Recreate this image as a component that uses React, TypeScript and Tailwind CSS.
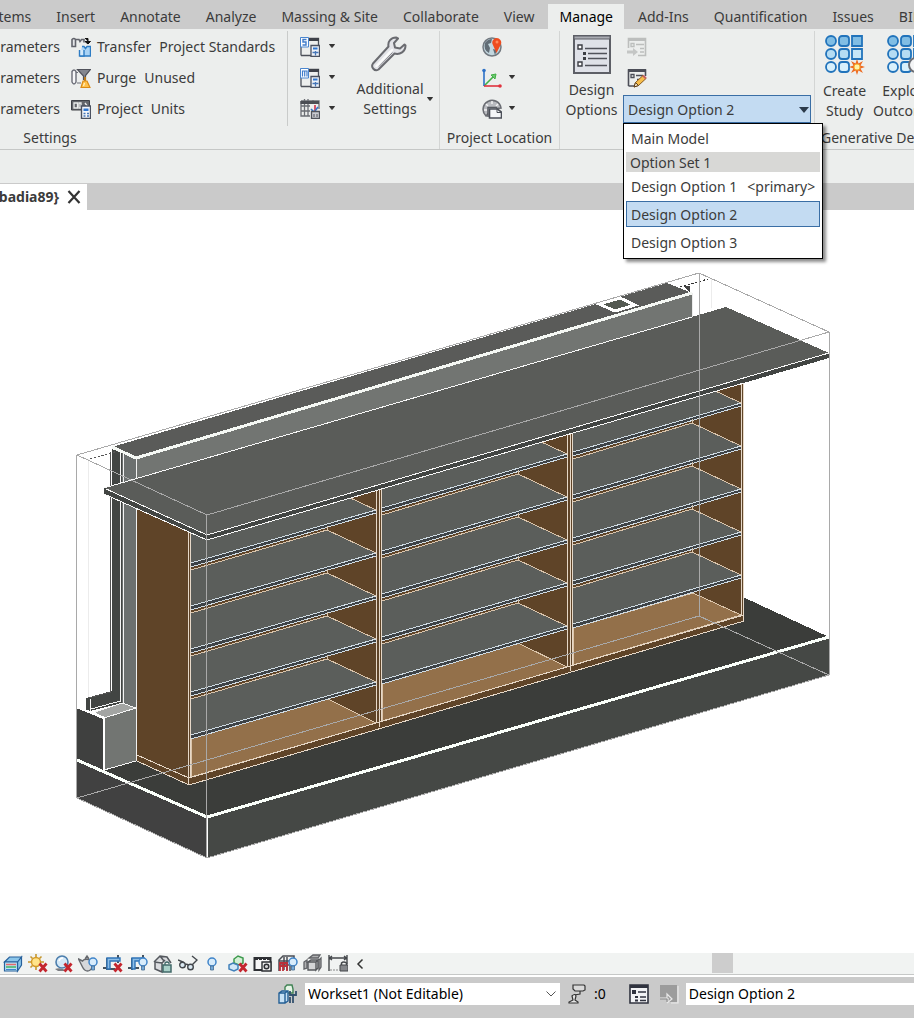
import { useState } from 'react';
import type { ReactNode } from 'react';

const tabs = [
  'Systems',
  'Insert',
  'Annotate',
  'Analyze',
  'Massing & Site',
  'Collaborate',
  'View',
  'Manage',
  'Add-Ins',
  'Quantification',
  'Issues',
  'BIM',
];

const Icon = ({ size = 20, children }: { size?: number; children: ReactNode }) => (
  <svg width={size} height={size} viewBox={`0 0 ${size} ${size}`} fill="none" className="shrink-0" aria-hidden="true">
    {children}
  </svg>
);

const Caret = () => (
  <svg width="8" height="5" viewBox="0 0 8 5" className="shrink-0" aria-hidden="true">
    <path d="M1.500 0.500h5L4 3.500z" fill="#333" stroke="#333" strokeLinejoin="round" />
  </svg>
);

/* ---------- ribbon icons ---------- */

const TransferIcon = () => (
  <Icon>
    <path d="M1 2.500q2-2 3.500 0v7H1zM4.500 2.500h3.500l1 2 1.500-2h2.500v3" fill="#e4e5e8" stroke="#62646c" strokeWidth="1.6" />
    <path d="M14 1.500h3v3M14 4.500h5.500L17 7z" stroke="#111" fill="#111" />
    <path d="M11 9.500h2l1.500 2 1.500-2h3.500V19H9" fill="#a9d3f5" stroke="#2d7cc4" strokeWidth="1.4" />
    <path d="M8.500 13v6H13v-6" fill="#d4eafb" stroke="#2d7cc4" strokeWidth="1.4" />
  </Icon>
);

const PurgeIcon = () => (
  <Icon>
    <path d="M1 3.500q2-3 4 0V14q-2 4-4 0z" fill="#f7f7f9" stroke="#6b6d77" strokeWidth="1.4" />
    <path d="M5 4.500h2M6 15h4" stroke="#6b6d77" strokeWidth="1.2" />
    <path d="M6.500 1.500h13l-5 6v4h-2V8z" fill="#83868f" stroke="#50525b" strokeWidth="1.2" />
    <path d="M14 9v4" stroke="#bd7b1c" strokeWidth="2" />
    <path d="M12 13h4l3 6.500H10z" fill="#ffc14a" stroke="#d98a17" strokeWidth="1.2" />
    <path d="M13.500 15l-1 3" stroke="#fff2c9" strokeWidth="1.2" />
  </Icon>
);

const UnitsIcon = () => (
  <Icon>
    <path d="M0.500 1.500h18V11H0.500z" fill="#63666b" stroke="#3e4146" />
    <path d="M3 4h3.500v5H3zM8 4h2v5H8zM14 4l3 4" stroke="#eceeed" strokeWidth="1.3" />
    <path d="M10.500 7h9v12.500h-9z" fill="#f2f5fa" stroke="#4a5160" strokeWidth="1.4" />
    <path d="M12.500 9.500h5v2.500h-5z" fill="#2f76d0" />
    <path d="M12.500 14.500h2M16 14.500h2M12.500 17h2M16 17h2" stroke="#4576b8" strokeWidth="1.3" />
  </Icon>
);

const SettingsSheetIcon = ({ letter }: { letter: 'S' | 'M' }) => (
  <Icon>
    <path d="M1 18.500V1.500h17.500V8M1 18.500h10" stroke="#4c5059" strokeWidth="1.3" />
    <path d="M9 1h10v3H9z" fill="#3f424a" />
    <path d="M0.500 0.500h8v9.500h-8z" fill="#fff" stroke="#4a86cf" />
    {letter === 'S' ? (
      <path d="M6.500 2.500H3v2.500h3v3H2.500" stroke="#3f7ccb" strokeWidth="1.4" />
    ) : (
      <path d="M2.500 8.500V3h4.500v5.500M4.700 3v5.500" stroke="#3f7ccb" strokeWidth="1.2" />
    )}
    <path d="M11 8.500h8.500v11H11z" fill="#eef2f8" stroke="#4a5160" strokeWidth="1.3" />
    <path d="M13 10.500h4.500v2H13z" fill="#2f76d0" />
    <path d="M12.500 15.500h6M15.500 14v4.500" stroke="#4576b8" strokeWidth="1.3" />
  </Icon>
);

const PanelScheduleIcon = () => (
  <Icon>
    <path d="M1 2h18v8M1 2v15h9M1 7h9M1 12h9M4.500 0v17M8 0v17M13 1v3" stroke="#6a6d73" strokeWidth="1.3" />
    <path d="M0.500 2h18.500v3H0.500z" fill="#4b4e54" />
    <path d="M15 6v7" stroke="#d12f4a" strokeWidth="1.6" />
    <path d="M11 10l3 3M18 8l-3 4" stroke="#3573c4" strokeWidth="1.6" />
    <path d="M11.500 12.500h8v7h-8z" fill="#c9cbd1" stroke="#50545c" strokeWidth="1.3" />
    <path d="M14 15v3M17 15v3" stroke="#50545c" />
  </Icon>
);

const WrenchIcon = () => (
  <Icon size={38}>
    <path
      d="M26 2.500C21 2.500 17.500 6.500 18.500 11.500L3 28.500C0.500 32 4.500 37 8.500 34.500L24.500 18.500C30 20 35.500 16.500 35.500 10.500L34.500 9.500L30 13.500L25 12.500L24 8L28 3.500Z"
      fill="#e3e4e8"
      stroke="#6a6b70"
      strokeWidth="2"
      strokeLinejoin="round"
    />
    <path d="M22 15L6.500 31" stroke="#fafafa" strokeWidth="2.500" strokeLinecap="round" />
    <path d="M22.500 17.500L9 31.500" stroke="#85868b" />
  </Icon>
);

const GlobeIcon = () => (
  <Icon>
    <circle cx="10" cy="10" r="9" fill="#c3d7df" stroke="#727980" strokeWidth="1.500" />
    <path d="M3 6q3-4 7-4l-1 4-3 1 2 4-1 5Q1 13 3 6zM11 12l4 1-2 5z" fill="#626d76" />
    <path d="M14.500 16L10.500 7a4.500 4.500 0 1 1 8.500 0z" fill="#ef4c1f" />
    <circle cx="15" cy="5" r="1.500" fill="#ff8a5c" />
  </Icon>
);

const AxesIcon = () => (
  <Icon>
    <path d="M2 18L12 8" stroke="#43b047" strokeWidth="1.600" />
    <path d="M14 6l-1 5-4-4z" fill="#6cc76f" stroke="#43b047" />
    <path d="M2 18V3" stroke="#2e71c7" strokeWidth="1.600" />
    <circle cx="2" cy="2.500" r="1.800" fill="#2e71c7" />
    <path d="M2 18h16" stroke="#e0323e" strokeWidth="1.600" />
    <circle cx="18" cy="18" r="1.800" fill="#e0323e" />
  </Icon>
);

const PositionIcon = () => (
  <Icon>
    <path d="M4 17A9 9 0 1 1 19 9L10 10z" fill="#b9bbc0" stroke="#6b6d73" strokeWidth="1.600" />
    <path d="M10 2v3M4 5l2 2M16 5l-2 2M2 11h3" stroke="#f4f4f4" strokeWidth="1.400" />
    <path d="M6 18V8.500h9" stroke="#585b62" strokeWidth="1.500" fill="#d5d7da" />
    <path d="M7.500 10h8l4 3v6h-12z" fill="#f5f6f8" stroke="#4c5059" strokeWidth="1.600" />
    <path d="M15 10v3.500h4" stroke="#4c5059" />
  </Icon>
);

const DesignOptionsIcon = () => (
  <Icon size={40}>
    <path d="M2 2h36v37H2z" fill="#dfe1e8" stroke="#5d5f66" strokeWidth="2" />
    <path d="M2 2h36v3H2z" fill="#a9abb2" stroke="#5d5f66" />
    <path d="M6 11h4v4H6zM6 28h4v4H6z" fill="#fff" stroke="#3c3e44" strokeWidth="1.400" />
    <path d="M13 14.500h22M16 19.500h19M16 24.500h19M13 31.500h22" stroke="#50525a" strokeWidth="1.500" />
    <path d="M11 18h3v3h-3zM11 23h3v3h-3z" fill="#3c3e44" />
  </Icon>
);

const AddToSetIcon = () => (
  <Icon>
    <path d="M1.500 11V1.500h17v17H11" stroke="#bcbebd" strokeWidth="1.600" />
    <path d="M1 1h18v3H1z" fill="#bcbebd" />
    <path d="M4 6.500h3v3H4zM9 7.500h8M13 11.500h4M13 15h4" stroke="#bcbebd" strokeWidth="1.300" />
    <path d="M0 13.500h6v-2.500l5 4-5 4v-2.500H0z" fill="#c4c6c5" />
  </Icon>
);

const PickToEditIcon = () => (
  <Icon>
    <path d="M1.500 18V2h17v6M1.500 18h6" stroke="#4c4e58" strokeWidth="1.600" />
    <path d="M1 1h18v3H1z" fill="#4c4e58" />
    <path d="M4 6.500h3v3H4zM9 7.500h7M10 11.500h3" stroke="#4c4e58" strokeWidth="1.300" />
    <path d="M7 19l1.500-4.500L16 7.500l3 3-7.500 7z" fill="#f6bd4b" stroke="#8a5a1e" />
    <path d="M7 19l1.500-4.500 3 3z" fill="#f7e5c5" stroke="#5a3d1a" />
    <path d="M16 7.500l3 3" stroke="#c65f5f" strokeWidth="2" />
  </Icon>
);

const StudyGrid = ({ children }: { children: ReactNode }) => (
  <Icon size={40}>
    <g stroke="#2173bb" strokeWidth="1.800">
      <circle cx="6" cy="6" r="5" fill="#80bde4" />
      <rect x="14" y="1" width="10" height="10" rx="3" fill="#80bde4" />
      <path d="M27 1h10v10H27z" fill="#80bde4" />
      <circle cx="6" cy="19" r="5" fill="#b5dcf3" />
      <rect x="14" y="14" width="10" height="10" rx="3" fill="#b5dcf3" />
      <path d="M27 14h10v10H27z" fill="#c6e6f7" />
      <circle cx="6" cy="32" r="5" fill="#d8f0fc" />
      <rect x="14" y="27" width="10" height="10" rx="3" fill="#d8f0fc" />
    </g>
    {children}
  </Icon>
);

/* ---------- view control bar ---------- */

const RedX = () => <path d="M11.500 9.500l7 8M18.500 9.500l-7 8" stroke="#c4262e" strokeWidth="2.800" />;
const Bulb = ({ x = 15, y = 8 }: { x?: number; y?: number }) => (
  <g>
    <circle cx={x} cy={y} r="4" fill="#d8ecfb" stroke="#3f84c9" strokeWidth="1.500" />
    <path d={`M${x - 1.5} ${y + 4}h3v4h-3z`} fill="#73a9d9" stroke="#44698f" strokeWidth="0.800" />
  </g>
);

const viewControls: { name: string; art: ReactNode }[] = [
  {
    name: 'Visual Style',
    art: (
      <>
        <path d="M1.500 8l5-5h12l-4 5zM14.500 8l4-5v8l-4 6z" fill="#8cc6ea" stroke="#27619c" strokeWidth="1.200" />
        <path d="M1.500 8h13v9h-13z" fill="#bfe4f4" stroke="#27619c" strokeWidth="1.200" />
        <path d="M3 10.500h10" stroke="#e56a6a" strokeWidth="1.500" />
        <path d="M3 13h10" stroke="#45b362" strokeWidth="1.500" />
        <path d="M3 15.500h10" stroke="#3f86cf" />
      </>
    ),
  },
  {
    name: 'Sun Path Off',
    art: (
      <>
        <path d="M8 0v3M8 13v3M0 8h3M2.500 2.500l2 2M13.500 2.500l-2 2M2.500 13.500l2-2M13 8h3" stroke="#c5962f" strokeWidth="1.600" />
        <circle cx="8" cy="8" r="4.500" fill="#ffe48a" stroke="#d49a26" strokeWidth="1.400" />
        <RedX />
      </>
    ),
  },
  {
    name: 'Shadows Off',
    art: (
      <>
        <path d="M2 15q6-2 12 2H5z" fill="#7b7d82" />
        <circle cx="9" cy="8" r="6" fill="#d5e9f8" stroke="#4c7ead" strokeWidth="1.600" />
        <path d="M6 7q1-3 4-3" stroke="#fff" strokeWidth="1.500" />
        <RedX />
      </>
    ),
  },
  {
    name: 'Show Rendering Dialog',
    art: (
      <>
        <path d="M0.500 5l4 2q2-3 9-1l1 7q-2 4-5 4t-5-4zM7 5l2-3 2 3" fill="#d6d8db" stroke="#66696e" strokeWidth="1.400" />
        <Bulb x={15} />
      </>
    ),
  },
  {
    name: 'Crop View Off',
    art: (
      <>
        <path d="M4 4v11h8M0 14h4M15 1v8" stroke="#46525e" strokeWidth="2" />
        <path d="M4 4h13v3H7v8H4z" fill="#8cbde6" stroke="#2f74b8" strokeWidth="1.400" />
        <RedX />
      </>
    ),
  },
  {
    name: 'Crop Region Visible',
    art: (
      <>
        <path d="M4 4v12M0 14h11M15 1v4" stroke="#46525e" strokeWidth="2" />
        <path d="M4 4h12v3H7v8H4z" fill="#8cbde6" stroke="#2f74b8" strokeWidth="1.400" />
        <Bulb />
      </>
    ),
  },
  {
    name: 'Unlocked 3D View',
    art: (
      <>
        <path d="M1 8l6-6 7 1 4 6M2 8v7l7 3V9zM7 2l4 5M1 8l8 1 3-3" stroke="#54585e" strokeWidth="1.500" fill="#dadcdf" />
        <path d="M10 11h8v7h-8z" fill="#a9d0c8" stroke="#426a69" strokeWidth="1.500" />
        <path d="M12 11V9q2-2 4 0v1" stroke="#426a69" strokeWidth="1.300" />
      </>
    ),
  },
  {
    name: 'Temporary Hide/Isolate',
    art: (
      <>
        <path d="M0 6l5 2 0 2M14 11l5-5-5-4M7 11q2-2 4 1" stroke="#43474c" strokeWidth="1.400" />
        <circle cx="4.500" cy="11" r="2.800" fill="#dceaf3" stroke="#43474c" strokeWidth="1.400" />
        <circle cx="12.500" cy="13" r="2.800" fill="#dceaf3" stroke="#43474c" strokeWidth="1.400" />
      </>
    ),
  },
  { name: 'Reveal Hidden Elements', art: <Bulb x={9} y={8} /> },
  {
    name: 'Worksharing Display Off',
    art: (
      <>
        <path d="M6 5l4-3 5 2v5l-4 2-5-2z" fill="#d5efd6" stroke="#3d9a4d" strokeWidth="1.500" />
        <path d="M1 11l4-2 5 2v4l-4 2-5-2z" fill="#d3e8f8" stroke="#4382bb" strokeWidth="1.500" />
        <RedX />
      </>
    ),
  },
  {
    name: 'Temporary View Properties',
    art: (
      <>
        <path d="M1.500 4h16v12h-16z" fill="#f6f6f6" stroke="#2d2f33" strokeWidth="2" />
        <path d="M2 4.500h15" stroke="#2d2f33" strokeWidth="3" strokeDasharray="3 1" />
        <path d="M9 8h9v9H9z" fill="#eee" stroke="#2d2f33" strokeWidth="1.400" />
        <circle cx="13.500" cy="12.500" r="2.300" fill="#d5d5d5" stroke="#2d2f33" strokeWidth="1.500" />
      </>
    ),
  },
  {
    name: 'Show Analytical Model',
    art: (
      <>
        <path d="M1 17V6l4-4h11v6M1 7h11v10M6 3v13M1 11h10M9 3v13" stroke="#4b4e54" strokeWidth="1.500" />
        <path d="M2 17V9h7v8M5 9v8M2 12h7" stroke="#bb3039" strokeWidth="1.800" />
        <Bulb />
      </>
    ),
  },
  {
    name: 'Highlight Displacement Sets',
    art: (
      <>
        <path d="M6 4l4-3h7l-2 3zM1 8l3-2v8l-3 1zM16 6l2-2v9l-2 3z" fill="#b0b1b3" stroke="#606266" strokeWidth="1.300" />
        <path d="M5 8l3-2h7l-2 2zM5 8h8v8H5zM13 8l2-2v8l-2 2z" fill="#d4d5d7" stroke="#56585c" strokeWidth="1.400" />
      </>
    ),
  },
  {
    name: 'Reveal Constraints',
    art: (
      <>
        <path d="M1 1v16M19 1v9M1 4h18M4 2L1.500 4 4 6M16 2l2.500 2L16 6" stroke="#44474b" strokeWidth="1.400" />
        <path d="M2 16h9" stroke="#888" strokeDasharray="2 1" />
        <path d="M12 11h8v6h-8z" fill="#84868a" stroke="#44474b" />
        <path d="M13.500 11V9q2-2 5 0v2" stroke="#44474b" strokeWidth="1.500" />
      </>
    ),
  },
];

/* ---------- 3D model ---------- */

// Each bay: left and right edge, first shelf height at the right edge,
// how much lower the shelf front sits on the left, and the floor corners.
const bays = [
  { x0: 191, x1: 376, tip: 510, drop: 53, floor: '191,777 376,723 328,699 191,739' },
  { x0: 382, x1: 567, tip: 454, drop: 54, floor: '382,721 567,667 518,643 382,683' },
  { x0: 573, x1: 741, tip: 403, drop: 49, floor: '573,665 741,615 693,593 573,628' },
];

const Shelf = ({ x0, x1, tip, drop }: { x0: number; x1: number; tip: number; drop: number }) => {
  const left = tip + drop;
  return (
    <g>
      <polygon points={`${x0},${left - 36} ${x1 - 49},${tip - 23} ${x1},${tip} ${x0},${left}`} fill="#5b5e5b" />
      <polyline
        points={`${x0},${left - 36} ${x1 - 49},${tip - 23} ${x1},${tip}`}
        fill="none"
        stroke="#d8c3ab"
      />
      <path d={`M${x1 - 49} ${tip - 23}v-4`} stroke="#d8c3ab" />
      <polygon points={`${x0},${left} ${x1},${tip} ${x1},${tip + 3} ${x0},${left + 4}`} fill="#3d4246" />
      <path d={`M${x0} ${left}L${x1} ${tip}v3L${x0} ${left + 4}`} stroke="#cfdbe3" fill="none" />
    </g>
  );
};

const ModelView = () => (
  <svg
    viewBox="0 210 914 743"
    className="block w-full h-auto"
    shapeRendering="crispEdges"
    role="img"
    aria-label="3D view of the shelving unit"
  >
    {/* floor slab */}
    <polygon points="77,760 207,817 829,637 745,598 500,640 104,748" fill="#3b3d3a" />
    <polygon points="77,760 207,817 207,858 77,798" fill="#414141" />
    <polygon points="207,817 829,637 829,675 207,858" fill="#454845" />

    {/* wall */}
    <polygon points="112,447 667,283 692,293 136,458" fill="#5a5b59" />
    <polygon points="136,458 692,293 692,320 136,484" fill="#727572" />
    <polygon points="122,452 136,458 136,708 122,703" fill="#6c706f" />
    <polygon points="112,449 122,453 122,703 86,712 86,698 112,691" fill="#424543" />
    <path d="M110.500 452V692L88 698" stroke="#555" fill="none" />
    <path d="M120.500 452V701L91 709M123.500 453V703M90.500 699V712" stroke="#f4f4f4" fill="none" />
    <path d="M88.500 459V697" stroke="#ececec" />
    <path d="M90 459L118 451" stroke="#555" strokeDasharray="2 2" />
    <polygon points="95,712 122,703 136,708 104,718" fill="#a3a5a3" />
    <polygon points="77,707 104,718 104,770 77,760" fill="#3f403f" />
    <polygon points="104,718 136,708 136,761 104,770" fill="#727572" />
    <path d="M95 712L122 703L136 708L104 718M104 770L136 761" stroke="#f6f6f6" fill="none" />
    <path d="M136.500 458V761" stroke="#f0f0f0" />
    <path d="M77 707L104 718V770" stroke="#fff" strokeWidth="2.500" fill="none" />
    <path d="M112 447L136 458L692 293" stroke="#f5f8f4" strokeWidth="3" fill="none" />
    <polygon points="599,304 615,311 635,305 620,298" fill="#545a52" stroke="#fff" strokeWidth="3" />
    <path d="M680 287L708 279" stroke="#333" strokeDasharray="2 2" />
    <path d="M683 286l7 0v6z" fill="#444" />
    <path d="M711.500 279V308M692.500 293V317" stroke="#ececec" />

    {/* slab edge */}
    <path d="M77 760L207 817L829 637" stroke="#fafffa" strokeWidth="3" fill="none" />
    <path d="M207 817V857" stroke="#fff" strokeWidth="2" />

    {/* cabinet */}
    <polygon points="137,505 189,528 189,785 137,761" fill="#5f4428" />
    <polygon points="189,528 744,366 744,621 189,785" fill="#5f4428" />
    {bays.map((bay) => (
      <g key={bay.x0}>
        <polygon
          points={`${bay.x0},${bay.tip + bay.drop} ${bay.x0},${bay.tip + bay.drop - 60} ${bay.x1 - 49},${bay.tip - 40} ${bay.x1 - 49},${bay.tip - 20}`}
          fill="#5b5e5b"
        />
        <polygon points={bay.floor} fill="#93704a" stroke="#dcc6ac" />
        {[0, 1, 2, 3, 4].map((i) => (
          <Shelf key={i} x0={bay.x0} x1={bay.x1} tip={bay.tip + i * 43} drop={bay.drop} />
        ))}
      </g>
    ))}
    <g stroke="#e6d8c8" fill="none">
      <path d="M137 761L189 785L744 621" />
      <path d="M137 755L189 778L744 615" />
      <path d="M188.500 530V784M190.500 530V778" />
      <path d="M376.500 488V723M379.500 488V727M381.500 488V721" />
      <path d="M567.500 432V667M570.500 432V671M572.500 432V665" />
      <path d="M741.500 382V615M743.500 382V621" />
    </g>

    {/* countertop */}
    <polygon points="104,488 207,535 829,353 726,307" fill="#5a5c59" />
    <polygon points="104,488 207,535 829,353 829,358 207,540 104,494" fill="#424543" />
    <path d="M104 494L207 540L744 383M104 488L207 535L829 353" stroke="#f7f7f7" fill="none" />
    <path d="M104 488L692 317" stroke="#f7f7f7" />
    <path d="M104.500 488V494" stroke="#424543" strokeWidth="2" />

    {/* section box */}
    <g stroke="#a9a9a9" fill="none">
      <polygon points="77,455 207,515 829,332 699,273" />
      <polygon points="77,798 207,858 829,675 699,616" />
      <path d="M76.500 455V798M206.500 515V858M829.500 332V675M699.500 273V616" />
    </g>
  </svg>
);

/* ---------- ribbon ---------- */

const CommandRow = ({ icon, words }: { icon: ReactNode; words: string[] }) => (
  <button className="flex h-[31px] items-center gap-1.5 whitespace-nowrap">
    {icon}
    <span className="flex gap-2">
      {words.map((word) => (
        <span key={word}>{word}</span>
      ))}
    </span>
  </button>
);

const PanelTitle = ({ children, className = '' }: { children: ReactNode; className?: string }) => (
  <div className={`h-6 whitespace-nowrap text-center leading-6 ${className}`}>{children}</div>
);

const options = [
  { name: 'Design Option 1', note: '<primary>' },
  { name: 'Design Option 2', note: '' },
  { name: 'Design Option 3', note: '' },
];

const OptionPicker = ({ value, onChange }: { value: string; onChange: (v: string) => void }) => {
  const item = 'flex h-[26px] w-full items-center gap-2.5 whitespace-nowrap border px-1 pt-px text-left';
  return (
    <div className="relative w-[188px]">
      <select
        aria-label="Active design option"
        value={value}
        onChange={(e) => onChange(e.target.value)}
        className="block h-7 w-full appearance-none border border-[#3a6ea5] bg-[#c3dbf2] px-1 pt-px"
      >
        <option>Main Model</option>
        {options.map((o) => (
          <option key={o.name}>{o.name}</option>
        ))}
      </select>
      <svg width="10" height="6" viewBox="0 0 10 6" className="pointer-events-none absolute right-0.5 top-3" aria-hidden="true">
        <path d="M0 0h10L5 6z" fill="#2b3a4a" />
      </svg>
      <ul
        role="listbox"
        aria-label="Design options"
        className="absolute left-0 top-7 z-10 w-[200px] border border-black bg-white px-0.5 pb-0.5 shadow-[3px_3px_3px_rgba(0,0,0,0.45)]"
      >
        <li className="py-px">
          <button className={`${item} border-transparent`} onClick={() => onChange('Main Model')}>
            Main Model
          </button>
        </li>
        <li className="h-5 bg-[#d8d8d6] px-1 leading-[21px]">Option Set 1</li>
        {options.map((o) => (
          <li key={o.name} role="option" aria-selected={o.name === value} className="py-px">
            <button
              onClick={() => onChange(o.name)}
              className={`${item} ${o.name === value ? 'border-[#3a6ea5] bg-[#c3dbf2]' : 'border-transparent'}`}
            >
              <span>{o.name}</span>
              {o.note && <span>{o.note}</span>}
            </button>
          </li>
        ))}
      </ul>
    </div>
  );
};

const Ribbon = ({ option, setOption }: { option: string; setOption: (v: string) => void }) => (
  <section className="flex h-[121px] overflow-x-clip border-b border-[#c5c7c6] bg-[#eceeed] pt-0.5">
    <div className="w-[440px] shrink-0 border-r border-[#d3d5d4]">
      <div className="flex h-[95px]">
        <div className="flex w-[60px] flex-col items-end">
          {['Project', 'Shared', 'Global'].map((kind) => (
            <button key={kind} aria-label={`${kind} Parameters`} className="h-[31px]">
              Parameters
            </button>
          ))}
        </div>
        <div className="ml-[11px] w-[216px]">
          <CommandRow icon={<TransferIcon />} words={['Transfer', 'Project Standards']} />
          <CommandRow icon={<PurgeIcon />} words={['Purge', 'Unused']} />
          <CommandRow icon={<UnitsIcon />} words={['Project', 'Units']} />
        </div>
        <div className="flex w-16 flex-col border-l border-[#c9cbca] pl-3">
          {[
            { name: 'Structural Settings', icon: <SettingsSheetIcon letter="S" /> },
            { name: 'MEP Settings', icon: <SettingsSheetIcon letter="M" /> },
            { name: 'Panel Schedule Templates', icon: <PanelScheduleIcon /> },
          ].map((b) => (
            <button key={b.name} aria-label={b.name} className="flex h-[31px] items-center gap-2">
              {b.icon}
              <Caret />
            </button>
          ))}
        </div>
        <button className="flex flex-1 flex-col items-center pt-1 leading-5">
          <span className="pr-3">
            <WrenchIcon />
          </span>
          <span className="mt-1.5 flex items-center gap-0.5">
            <span>
              Additional
              <br />
              Settings
            </span>
            <Caret />
          </span>
        </button>
      </div>
      <PanelTitle className="w-[100px]">Settings</PanelTitle>
    </div>

    <div className="w-[120px] shrink-0 border-r border-[#d3d5d4]">
      <div className="flex h-[95px] flex-col pl-[42px]">
        <button aria-label="Location" className="flex h-[31px] items-center">
          <GlobeIcon />
        </button>
        <button aria-label="Coordinates" className="flex h-[31px] items-center gap-1.5">
          <AxesIcon />
          <Caret />
        </button>
        <button aria-label="Position" className="flex h-[31px] items-center gap-1.5">
          <PositionIcon />
          <Caret />
        </button>
      </div>
      <PanelTitle>Project Location</PanelTitle>
    </div>

    <div className="flex w-[255px] shrink-0 border-r border-[#d3d5d4]">
      <button className="flex w-[63px] flex-col items-center pt-[3px] leading-5">
        <DesignOptionsIcon />
        <span className="mt-1.5">
          Design
          <br />
          Options
        </span>
      </button>
      <div>
        <button aria-label="Add to Set" className="flex h-[31px] items-center pl-1">
          <AddToSetIcon />
        </button>
        <button aria-label="Pick to Edit" className="mb-0.5 flex h-[31px] items-center pl-1">
          <PickToEditIcon />
        </button>
        <OptionPicker value={option} onChange={setOption} />
      </div>
    </div>

    <div className="min-w-0 flex-1 overflow-hidden">
      <div className="flex h-[95px] gap-[7px] pl-2 pt-1 leading-5">
        <button className="flex shrink-0 flex-col items-center">
          <StudyGrid>
            <path
              d="M32 24l1.500 4.500 4.500-2.500-2.500 4.500 4.500 1.500-4.500 1.500 2.500 4.500-4.500-2.500L32 40l-1.500-4.500-4.500 2.500 2.500-4.500L24 32l4.500-1.500-2.500-4.500 4.500 2.500z"
              fill="#ee6a1f"
            />
            <circle cx="32" cy="32" r="3" fill="#fff3a8" stroke="#f5ad2a" />
          </StudyGrid>
          <span className="mt-1.5">
            Create
            <br />
            Study
          </span>
        </button>
        <button className="flex shrink-0 flex-col items-center">
          <StudyGrid>
            <circle cx="29" cy="30" r="7" fill="#f4f5f6" stroke="#6d6f75" strokeWidth="2" />
          </StudyGrid>
          <span className="mt-1.5">
            Explore
            <br />
            Outcomes
          </span>
        </button>
      </div>
      <PanelTitle className="pl-1.5 text-left">Generative Design</PanelTitle>
    </div>
  </section>
);

const StatusBar = ({ option, setOption }: { option: string; setOption: (v: string) => void }) => (
  <footer className="flex h-[41px] items-start overflow-hidden bg-[#cacaca] pl-[278px] pt-1.5 text-black">
    <div className="flex h-[22px] w-full items-center">
      <Icon>
        <path d="M7 6V3l2-2h5l1 4v4H9" fill="#e5f4e6" stroke="#3f8153" strokeWidth="1.400" />
        <path d="M1 9l3-2h6v10l-3 2H1zM1 9h6v10M7 9l3-2" fill="#c7e1f5" stroke="#235f95" strokeWidth="1.400" />
        <path d="M12 7v4h6V7M15 11v8M12 19v-6" stroke="#34516e" strokeWidth="1.800" />
      </Icon>
      <div className="relative ml-[7px] w-[255px] shrink-0">
        <select aria-label="Active workset" className="block h-[22px] w-full appearance-none bg-white px-[3px]">
          <option>Workset1 (Not Editable)</option>
        </select>
        <svg width="10" height="6" viewBox="0 0 10 6" className="pointer-events-none absolute right-1 top-2" fill="none" aria-hidden="true">
          <path d="M0.500 0.500L5 5L9.500 0.500" stroke="#555" />
        </svg>
      </div>
      <button className="ml-2 flex shrink-0 items-center gap-1.5">
        <Icon>
          <path d="M5 1h11l1 1v4l-2 1H7L5 5zM12 7v3L6 11" stroke="#333" strokeWidth="1.200" fill="#d9d9d9" />
          <path d="M4 12q3-3 4 0l-1 4 3 2v1H1v-1l4-2z" stroke="#333" strokeWidth="1.200" fill="#e6e6e6" />
        </Icon>
        <span>:0</span>
      </button>
      <button aria-label="Design options dialog" className="ml-[23px] shrink-0">
        <Icon>
          <path d="M1 1h18v18H1z" fill="#f2f3f5" stroke="#30333f" strokeWidth="1.600" />
          <path d="M1 1h18v3H1z" fill="#30333f" />
          <path d="M3 6h4v4H3zM6 12h3v2H6zM6 15.500h3v2H6z" fill="#30333f" />
          <path d="M9 8h8M11 13h6M11 16.500h6" stroke="#30333f" strokeWidth="1.300" />
        </Icon>
      </button>
      <button aria-label="Active only" className="ml-2.5 shrink-0">
        <Icon>
          <path d="M1 1h17v17H10v-4H1z" fill="#9c9c9c" />
          <path d="M1 14h7v-4l5 5-5 4M12 19h7V2" stroke="#e9e9e9" strokeWidth="1.200" />
          <path d="M1 15h7v3" stroke="#888" />
        </Icon>
      </button>
      <select
        aria-label="Status bar design option"
        value={option}
        onChange={(e) => setOption(e.target.value)}
        className="ml-[7px] block h-[22px] min-w-0 flex-1 appearance-none bg-white px-[3px]"
      >
        <option>Main Model</option>
        {options.map((o) => (
          <option key={o.name}>{o.name}</option>
        ))}
      </select>
    </div>
  </footer>
);

export default function App() {
  const [option, setOption] = useState('Design Option 2');

  return (
    <div className="flex min-h-screen flex-col overflow-hidden bg-white font-['Noto_Sans','Open_Sans',sans-serif] text-sm text-[#3b3b3b]">
      <nav className="flex h-[29px] items-end overflow-hidden bg-[#cbcbcb]">
        <div className="-ml-[34px] flex gap-[3px]">
          {tabs.map((tab) => (
            <button
              key={tab}
              className={`h-[25px] whitespace-nowrap px-[11px] ${tab === 'Manage' ? 'bg-[#eceeed] text-black' : ''}`}
            >
              {tab}
            </button>
          ))}
        </div>
      </nav>
      <Ribbon option={option} setOption={setOption} />
      <div className="h-[33px] bg-[#eceeed]" />
      <div className="flex h-[27px] items-end overflow-hidden bg-[#cacaca]">
        <div className="flex h-[26px] w-[87px] items-center justify-end gap-2 bg-white pr-1.5 font-bold">
          <span>badia89{'}'}</span>
          <button aria-label="Close view">
            <svg width="14" height="14" viewBox="0 0 14 14" aria-hidden="true">
              <path d="M1.500 1l11 12M12.500 1l-11 12" stroke="#333" strokeWidth="2.200" />
            </svg>
          </button>
        </div>
      </div>

      <main className="flex-1">
        <ModelView />
      </main>

      <div className="flex h-[22px] items-center border-b border-[#c6c8c7] bg-[#f1f3f2] pl-[3px]">
        <div className="flex gap-[5px]">
          {viewControls.map((c) => (
            <button key={c.name} aria-label={c.name}>
              <Icon>{c.art}</Icon>
            </button>
          ))}
        </div>
        <button aria-label="Collapse" className="ml-2">
          <svg width="8" height="12" viewBox="0 0 8 12" fill="none" aria-hidden="true">
            <path d="M6.500 1.500L2 6l4.500 4.500" stroke="#333" strokeWidth="1.500" />
          </svg>
        </button>
        <div className="flex h-full flex-1 pl-[348px]">
          <div className="h-5 w-[21px] bg-[#cdcdcd]" />
        </div>
      </div>
      <div className="h-0.5 bg-white" />
      <StatusBar option={option} setOption={setOption} />
    </div>
  );
}
